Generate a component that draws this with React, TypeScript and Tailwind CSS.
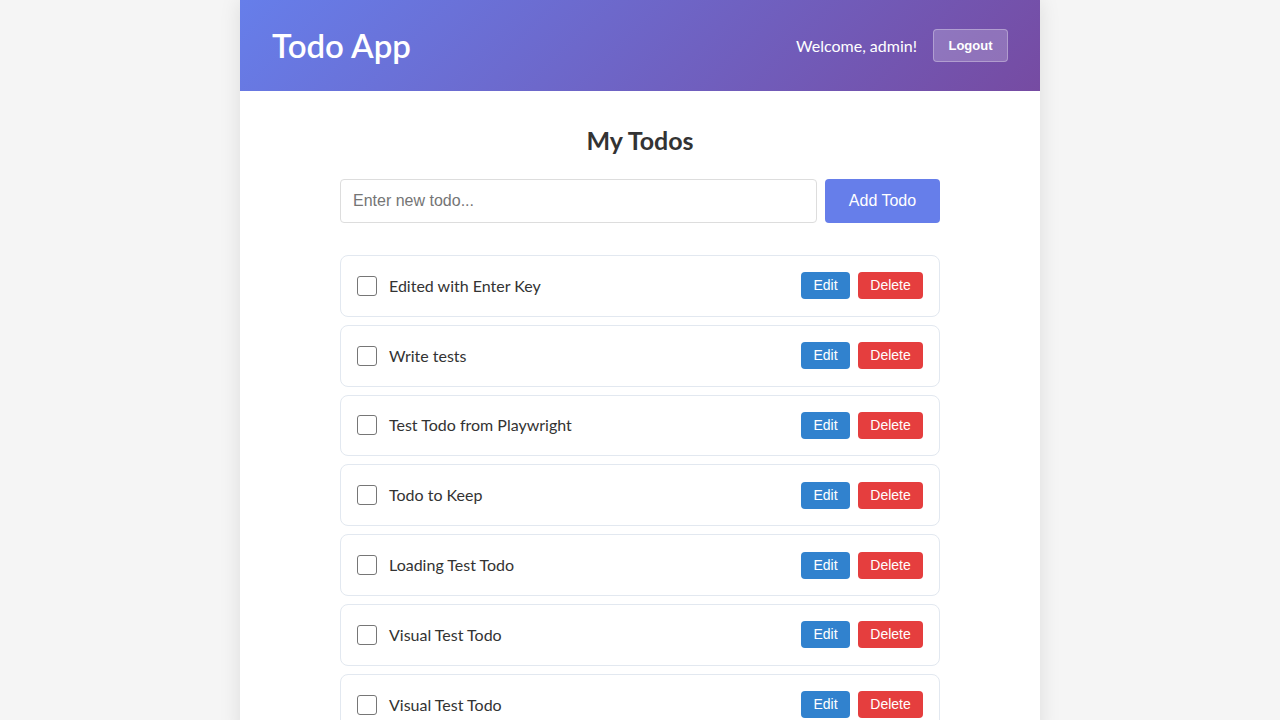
import React from "react";

const todos = [
  "Edited with Enter Key",
  "Write tests",
  "Test Todo from Playwright",
  "Todo to Keep",
  "Loading Test Todo",
  "Visual Test Todo",
  "Visual Test Todo",
];

export default function App() {
  return (
    <div className="min-h-screen bg-[#f5f5f5]" style={{ fontFamily: 'Lato, "Noto Sans", sans-serif' }}>
      <div className="mx-auto w-[800px] min-h-screen bg-white shadow-[0_0_20px_rgba(0,0,0,0.1)]">
        <header className="h-[91px] px-8 flex items-center justify-between bg-[linear-gradient(135deg,#667eea_0%,#764ba2_100%)] text-white">
          <h1 className="text-[33px] font-semibold leading-none">Todo App</h1>
          <div className="flex items-center gap-4">
            <span className="text-base">Welcome, admin!</span>
            <button
              className="h-[33px] w-[75px] rounded-[4px] border border-white/30 bg-white/20 text-[13px] font-bold text-white"
              style={{ fontFamily: '"Liberation Sans", Arial, sans-serif' }}
            >
              Logout
            </button>
          </div>
        </header>
        <main className="mx-auto w-[600px] pt-[33px]">
          <h2 className="text-center text-[25px] font-bold text-[#333] leading-[32px]">My Todos</h2>
          <div className="mt-[23px] flex gap-2">
            <input
              className="h-[44px] flex-1 rounded-[4px] border border-[#ddd] px-3 text-base text-[#333] placeholder:text-[#757575] outline-none"
              style={{ fontFamily: '"Liberation Sans", Arial, sans-serif' }}
              placeholder="Enter new todo..."
            />
            <button
              className="h-[44px] w-[115px] rounded-[4px] bg-[#667eea] text-base text-white"
              style={{ fontFamily: '"Liberation Sans", Arial, sans-serif' }}
            >
              Add Todo
            </button>
          </div>
          <ul className="mt-8 flex flex-col gap-2">
            {todos.map((t, i) => (
              <li
                key={i}
                className="h-[61.8px] flex items-center rounded-lg border border-[#e2e8f0] bg-white px-4"
              >
                <div className="h-[20px] w-[20px] rounded-[3px] border border-[#767676] bg-white" />
                <span className="ml-3 flex-1 text-base text-[#333]">{t}</span>
                <div className="flex gap-2" style={{ fontFamily: '"Liberation Sans", Arial, sans-serif' }}>
                  <button className="h-[27px] w-[49px] rounded-[4px] bg-[#3182ce] pb-px text-sm text-white">Edit</button>
                  <button className="h-[27px] w-[65px] rounded-[4px] bg-[#e53e3e] pb-px text-sm text-white">Delete</button>
                </div>
              </li>
            ))}
          </ul>
        </main>
      </div>
    </div>
  );
}
